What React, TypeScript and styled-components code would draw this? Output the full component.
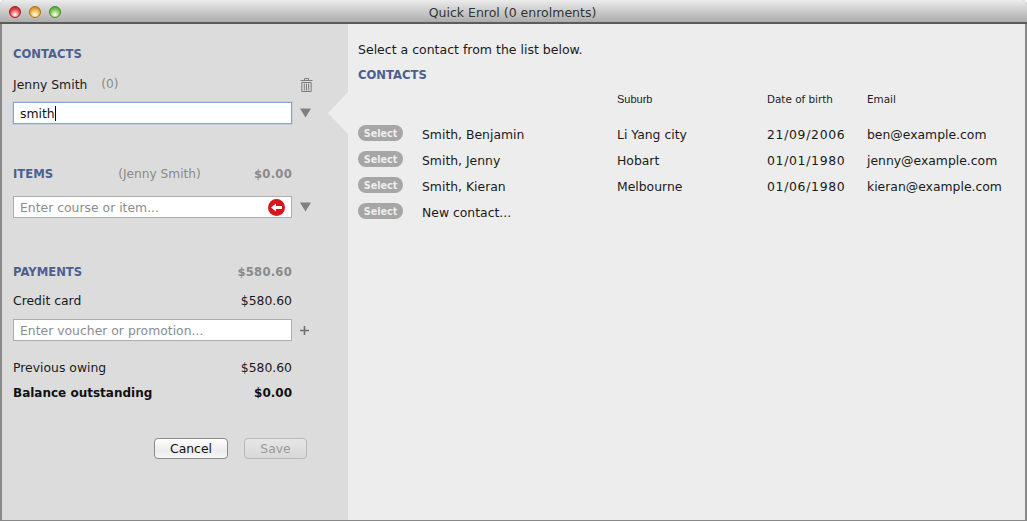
import { Fragment } from 'react'
import styled, { createGlobalStyle } from 'styled-components'

// ── Styled components ──────────────────────────────────────────────────────────

const Global = createGlobalStyle`
  html, body { margin: 0; padding: 0; background: #fff; }
  body { font-family: "DejaVu Sans", "Liberation Sans", sans-serif; font-size: 12.4px; color: #1a1a1a; }
`

const Window = styled.div`
  width: 1027px;
  height: 521px;
  display: flex;
  flex-direction: column;
  box-sizing: border-box;
  overflow: hidden;
  border-radius: 5px 5px 0 0;
  background: #8a8a8a;
  padding: 0 2px 1px 2px;
`

const TitleBar = styled.div`
  height: 20px;
  flex: none;
  margin: 0 -2px;
  padding: 2px 2px 0 0;
  display: flex;
  align-items: center;
  position: relative;
  justify-content: center;
  background: linear-gradient(#ececec, #d8d8d8 30%, #adadad);
  border-bottom: 2px solid #5c5c5c;
  color: #333;
  font-size: 12.5px;
`

const Lights = styled.div`
  position: absolute;
  left: 9px;
  top: 6px;
  display: flex;
  gap: 8px;
`

const Light = styled.span<{ $c: string; $d: string }>`
  width: 12px;
  height: 12px;
  border-radius: 50%;
  box-sizing: border-box;
  border: 1px solid ${p => p.$d};
  background: radial-gradient(circle at 50% 75%, #fff 0, ${p => p.$c} 55%, ${p => p.$d} 100%);
`

const Body = styled.div`
  flex: 1;
  display: flex;
  min-height: 0;
`

const Side = styled.div`
  width: 346px;
  flex: none;
  box-sizing: border-box;
  background: #dcdcdc;
  padding: 22px 0 0 11px;
  position: relative;
`

const Notch = styled.div`
  position: absolute;
  right: 0;
  top: 68px;
  width: 0;
  height: 0;
  border-style: solid;
  border-width: 21px 20px 21px 0;
  border-color: transparent #ededed transparent transparent;
`

const Row = styled.div<{ $mt?: number }>`
  width: 279px;
  height: 16px;
  flex: none;
  margin-top: ${p => p.$mt ?? 0}px;
  display: flex;
  align-items: center;
  justify-content: space-between;
  white-space: nowrap;
`

const Heading = styled.div<{ $mt?: number }>`
  color: #4c5f8e;
  font-weight: 700;
  font-size: 11.6px;
  line-height: 16px;
  height: 16px;
  margin-top: ${p => p.$mt ?? 0}px;
  white-space: nowrap;
`

const Muted = styled.span`
  color: #8a8a8a;
  font-size: 12.2px;
`

const ItemsFor = styled(Muted)`
  margin-left: 12px;
`

const MutedAmount = styled.span`
  color: #8a8a8a;
  font-weight: 700;
  font-size: 11.6px;
  letter-spacing: 0.25px;
`

const NameWrap = styled.span`
  display: flex;
  gap: 14px;
`

const Strong = styled.span`
  font-weight: 700;
  color: #111;
  font-size: 12px;
`

const ToolRow = styled.div<{ $mt: number }>`
  display: flex;
  align-items: center;
  margin-top: ${p => p.$mt}px;
  width: 300px;
  gap: 8px;
`

const Field = styled.div<{ $focus?: boolean }>`
  width: 279px;
  height: 22px;
  flex: none;
  box-sizing: border-box;
  background: #fff;
  border: 1px solid ${p => (p.$focus ? '#86a5cc' : '#adadad')};
  box-shadow: ${p => (p.$focus ? '0 0 0 0.5px #a9c1de' : 'none')};
  padding-left: 6px;
  display: flex;
  align-items: center;
  justify-content: space-between;
  color: ${p => (p.$focus ? '#111' : '#8c8c8c')};
`

const Caret = styled.span`
  width: 1px;
  height: 15px;
  background: #000;
`

const TypedText = styled.span`
  display: flex;
  align-items: center;
`

const Actions = styled.div`
  width: 294px;
  margin-top: 37px;
  display: flex;
  justify-content: flex-end;
  gap: 16px;
`

const Btn = styled.div<{ $off?: boolean }>`
  width: ${p => (p.$off ? 63 : 74)}px;
  height: 21px;
  box-sizing: border-box;
  border-radius: 4px;
  border: 1px solid ${p => (p.$off ? '#b8b8b8' : '#8a8a8a')};
  background: ${p => (p.$off ? 'linear-gradient(#e6e6e6, #d8d8d8)' : 'linear-gradient(#fff, #ececec 60%, #f6f6f6)')};
  color: ${p => (p.$off ? '#9a9a9a' : '#111')};
  display: flex;
  align-items: center;
  justify-content: center;
`

const Main = styled.div`
  flex: 1;
  background: #ededed;
  padding: 18px 0 0 10px;
`

const Intro = styled.div`
  line-height: 16px;
  height: 16px;
  font-size: 12.5px;
`

const Grid = styled.div`
  display: grid;
  grid-template-columns: 64px 195px 150px 100px 1fr;
  grid-auto-rows: 26px;
  align-items: center;
  white-space: nowrap;
  margin-top: 11px;
`

const HeadCell = styled.div<{ $sans?: boolean }>`
  font-family: ${p => (p.$sans ? '"Liberation Sans", sans-serif' : 'inherit')};
  font-size: ${p => (p.$sans ? 11 : 10.4)}px;
  height: 36px;
  line-height: 16px;
  padding-top: 2px;
  box-sizing: border-box;
  color: #222;
`

const Cell = styled.div<{ $date?: boolean }>`
  padding-top: 2px;
  letter-spacing: ${p => (p.$date ? 0.7 : 0)}px;
`

const SelectPill = styled.div`
  width: 45px;
  height: 16px;
  border-radius: 8px;
  background: #a6a6a6;
  color: #eee;
  font-weight: 700;
  font-size: 9.6px;
  display: flex;
  align-items: center;
  justify-content: center;
`

const ClearSvg = styled.svg`
  margin-right: 6px;
`

// ── Icons ──────────────────────────────────────────────────────────────────────

const Trash = () => (
  <svg width="13" height="15" viewBox="0 0 13 15" fill="none" stroke="#7d7d7d" strokeWidth="1">
    <path d="M0.5 3.5h12M4.5 3V1.5h4V3" />
    <path d="M1.8 5.5h9.4v9H1.8z" />
    <path d="M4.3 6.5v7M6.5 6.5v7M8.7 6.5v7" />
  </svg>
)

const Arrow = () => (
  <svg width="11" height="10" viewBox="0 0 11 10">
    <path d="M0 0.5h11L5.5 9.5z" fill="#808080" />
  </svg>
)

const Plus = () => (
  <svg width="9" height="9" viewBox="0 0 9 9">
    <path d="M3.7 0h1.6v3.7H9v1.6H5.3V9H3.7V5.3H0V3.7h3.7z" fill="#6f6f6f" />
  </svg>
)

const ClearIcon = () => (
  <ClearSvg width="17" height="17" viewBox="0 0 17 17">
    <circle cx="8.5" cy="8.5" r="8.5" fill="#d5161c" />
    <path d="M3 8.5L8 4.5v2.4h6v3.2H8v2.4z" fill="#fff" />
  </ClearSvg>
)

// ── Component ──────────────────────────────────────────────────────────────────

const contacts = [
  { name: 'Smith, Benjamin', suburb: 'Li Yang city', dob: '21/09/2006', email: 'ben@example.com' },
  { name: 'Smith, Jenny', suburb: 'Hobart', dob: '01/01/1980', email: 'jenny@example.com' },
  { name: 'Smith, Kieran', suburb: 'Melbourne', dob: '01/06/1980', email: 'kieran@example.com' },
  { name: 'New contact...', suburb: '', dob: '', email: '' },
]

export default function App() {
  return (
    <Window>
      <Global />
      <TitleBar>
        <Lights>
          <Light $c="#e8484c" $d="#a01c20" />
          <Light $c="#ecb13c" $d="#a8741a" />
          <Light $c="#7cc850" $d="#4a8a2c" />
        </Lights>
        Quick Enrol (0 enrolments)
      </TitleBar>
      <Body>
        <Side>
          <Notch />
          <Heading>CONTACTS</Heading>
          <ToolRow $mt={14}>
            <Row>
              <NameWrap>Jenny Smith <Muted>(0)</Muted></NameWrap>
            </Row>
            <Trash />
          </ToolRow>
          <ToolRow $mt={10}>
            <Field $focus><TypedText>smith<Caret /></TypedText></Field>
            <Arrow />
          </ToolRow>

          <Row $mt={42}>
            <Heading>ITEMS</Heading>
            <ItemsFor>(Jenny Smith)</ItemsFor>
            <MutedAmount>$0.00</MutedAmount>
          </Row>
          <ToolRow $mt={14}>
            <Field>Enter course or item...<ClearIcon /></Field>
            <Arrow />
          </ToolRow>

          <Row $mt={46}>
            <Heading>PAYMENTS</Heading>
            <MutedAmount>$580.60</MutedAmount>
          </Row>
          <Row $mt={12}>
            <span>Credit card</span>
            <span>$580.60</span>
          </Row>
          <ToolRow $mt={11}>
            <Field>Enter voucher or promotion...</Field>
            <Plus />
          </ToolRow>
          <Row $mt={18}>
            <span>Previous owing</span>
            <span>$580.60</span>
          </Row>
          <Row $mt={10}>
            <Strong>Balance outstanding</Strong>
            <Strong>$0.00</Strong>
          </Row>
          <Actions>
            <Btn>Cancel</Btn>
            <Btn $off>Save</Btn>
          </Actions>
        </Side>
        <Main>
          <Intro>Select a contact from the list below.</Intro>
          <Heading $mt={9}>CONTACTS</Heading>
          <Grid>
            <HeadCell />
            <HeadCell />
            <HeadCell $sans>Suburb</HeadCell>
            <HeadCell>Date of birth</HeadCell>
            <HeadCell>Email</HeadCell>
            {contacts.map(c => (
              <Fragment key={c.name}>
                <SelectPill>Select</SelectPill>
                <Cell>{c.name}</Cell>
                <Cell>{c.suburb}</Cell>
                <Cell $date>{c.dob}</Cell>
                <Cell>{c.email}</Cell>
              </Fragment>
            ))}
          </Grid>
        </Main>
      </Body>
    </Window>
  )
}
